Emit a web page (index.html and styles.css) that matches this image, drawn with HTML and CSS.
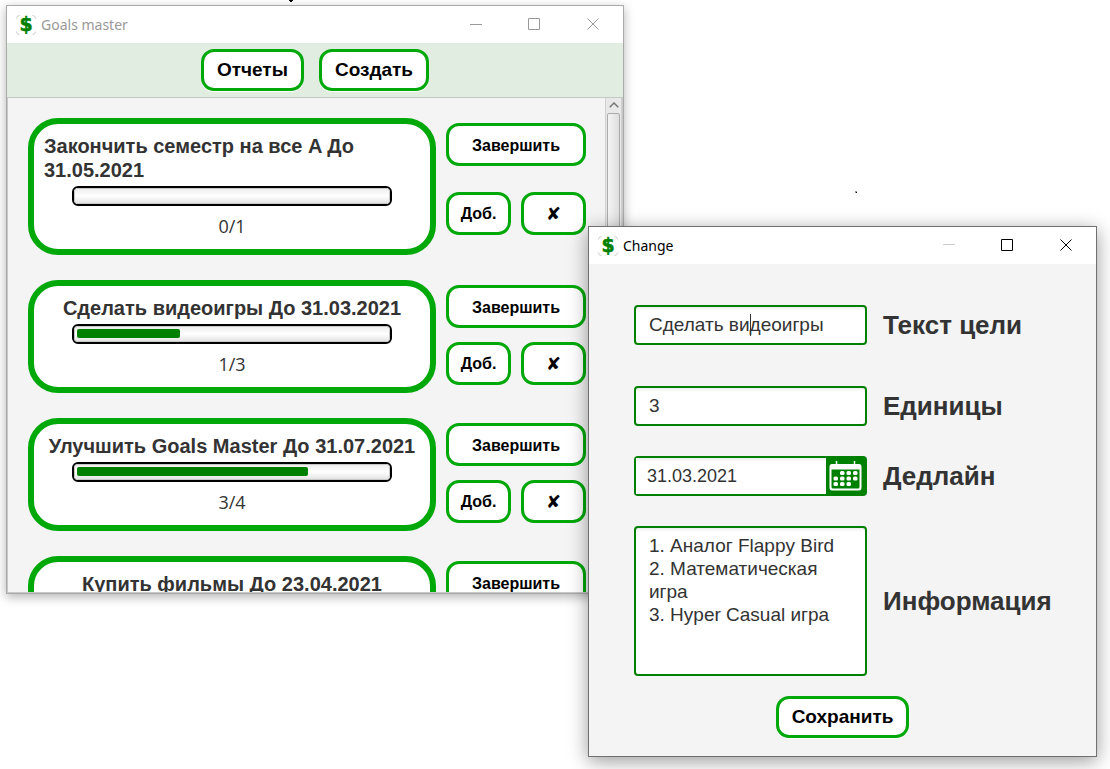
FILE: index.html
```html
<!DOCTYPE html>
<html lang="ru">
<head>
  <meta charset="utf-8">
  <title>Goals master</title>
  <link rel="stylesheet" href="styles.css">
</head>
<body class="desktop">
  <svg class="speck speck-top" width="4" height="2" viewBox="0 0 4 2" aria-hidden="true"><path d="M0 0h4v1H3v1H1V1H0z"/></svg>
  <svg class="speck speck-side" width="2" height="2" viewBox="0 0 2 2" aria-hidden="true"><path d="M0 0h2v2H0z" fill="#999"/><path d="M1 1h1v1H1z"/></svg>

  <section class="window window-goals" aria-label="Goals master">
    <header class="titlebar">
      <svg class="app-icon" width="20" height="20" viewBox="0 0 20 20" aria-hidden="true">
        <path class="app-icon-corners" d="M.5 3.500Q.5.500 3.500.500M16.500.500Q19.500.500 19.500 3.500M19.500 16.500Q19.500 19.500 16.500 19.500M3.500 19.500Q.5 19.500 .5 16.500"/>
        <text x="10" y="16" text-anchor="middle">$</text>
      </svg>
      <h1 class="title">Goals master</h1>
      <div class="controls">
        <button class="control" aria-label="Свернуть"><svg width="13" height="13" viewBox="0 0 13 13"><path d="M1 6.500h12"/></svg></button>
        <button class="control" aria-label="Развернуть"><svg width="13" height="13" viewBox="0 0 13 13"><path d="M.5.500h11v11H.5z"/></svg></button>
        <button class="control" aria-label="Закрыть"><svg width="13" height="13" viewBox="0 0 13 13"><path d="M.5.500l11 11M11.500.500l-11 11"/></svg></button>
      </div>
    </header>
    <nav class="toolbar">
      <button class="btn btn-large">Отчеты</button>
      <button class="btn btn-large">Создать</button>
    </nav>
    <main class="scroll-pane">
      <div class="goals">
        <article class="goal">
          <div class="card">
            <h2 class="goal-title">Закончить семестр на все A До 31.05.2021</h2>
            <progress class="bar" value="0" max="1" aria-label="Прогресс"></progress>
            <p class="count">0/1</p>
          </div>
          <div class="actions">
            <button class="btn btn-wide">Завершить</button>
            <button class="btn">Доб.</button>
            <button class="btn btn-cross">✘</button>
          </div>
        </article>
        <article class="goal">
          <div class="card">
            <h2 class="goal-title">Сделать видеоигры До 31.03.2021</h2>
            <progress class="bar" value="1" max="3" aria-label="Прогресс"></progress>
            <p class="count">1/3</p>
          </div>
          <div class="actions">
            <button class="btn btn-wide">Завершить</button>
            <button class="btn">Доб.</button>
            <button class="btn btn-cross">✘</button>
          </div>
        </article>
        <article class="goal">
          <div class="card">
            <h2 class="goal-title">Улучшить Goals Master До 31.07.2021</h2>
            <progress class="bar" value="3" max="4" aria-label="Прогресс"></progress>
            <p class="count">3/4</p>
          </div>
          <div class="actions">
            <button class="btn btn-wide">Завершить</button>
            <button class="btn">Доб.</button>
            <button class="btn btn-cross">✘</button>
          </div>
        </article>
        <article class="goal">
          <div class="card">
            <h2 class="goal-title">Купить фильмы До 23.04.2021</h2>
          </div>
          <div class="actions">
            <button class="btn btn-wide">Завершить</button>
          </div>
        </article>
      </div>
      <div class="scrollbar">
        <svg class="scroll-arrow" width="10" height="6" viewBox="0 0 10 6" aria-hidden="true"><path d="M.7 5.300L5 1l4.300 4.300"/></svg>
        <div class="thumb"></div>
      </div>
    </main>
  </section>

  <section class="window window-change" aria-label="Change">
    <header class="titlebar">
      <svg class="app-icon" width="20" height="20" viewBox="0 0 20 20" aria-hidden="true">
        <path class="app-icon-corners" d="M.5 3.500Q.5.500 3.500.500M16.500.500Q19.500.500 19.500 3.500M19.500 16.500Q19.500 19.500 16.500 19.500M3.500 19.500Q.5 19.500 .5 16.500"/>
        <text x="10" y="16" text-anchor="middle">$</text>
      </svg>
      <h1 class="title">Change</h1>
      <div class="controls">
        <button class="control" aria-label="Свернуть" disabled><svg width="13" height="13" viewBox="0 0 13 13"><path d="M1 5.500h12"/></svg></button>
        <button class="control" aria-label="Развернуть"><svg width="13" height="13" viewBox="0 0 13 13"><path d="M.5.500h11v11H.5z"/></svg></button>
        <button class="control" aria-label="Закрыть"><svg width="13" height="13" viewBox="0 0 13 13"><path d="M.5.500l11 11M11.500.500l-11 11"/></svg></button>
      </div>
    </header>
    <form class="form">
      <div class="row row-spaced">
        <div class="input-wrap">
          <input class="field" id="goal-text" type="text" value="Сделать видеоигры">
          <span class="caret"></span>
        </div>
        <label class="label" for="goal-text">Текст цели</label>
      </div>
      <div class="row">
        <input class="field" id="units" type="text" value="3">
        <label class="label" for="units">Единицы</label>
      </div>
      <div class="row">
        <div class="date">
          <input class="date-field" id="deadline" type="text" value="31.03.2021">
          <button class="date-button" type="button" aria-label="Календарь">
            <svg width="33" height="30" viewBox="0 0 33 30" aria-hidden="true">
              <path d="M7.500 0v5M25.500 0v5" stroke="#fff" stroke-width="1.500"/>
              <path fill="#fff" fill-rule="evenodd" d="M3 3h27q2.500 0 2.500 3v20.500q0 3-2.500 3H3q-2.500 0-2.500-3V6q0-3 2.500-3zM2.500 8.500v17.500q0 1.500 1.500 1.500h25q1.500 0 1.500-1.500V8.500z"/>
              <g fill="#fff">
                <rect x="11" y="10" width="4.500" height="4" rx="1.500"/>
                <rect x="17.500" y="10" width="4.500" height="4" rx="1.500"/>
                <rect x="24" y="10" width="4.500" height="4" rx="1.500"/>
                <rect x="4.500" y="15.500" width="4.500" height="4" rx="1.500"/>
                <rect x="11" y="15.500" width="4.500" height="4" rx="1.500"/>
                <rect x="17.500" y="15.500" width="4.500" height="4" rx="1.500"/>
                <rect x="24" y="15.500" width="4.500" height="4" rx="1.500"/>
                <rect x="4.500" y="21" width="4.500" height="4" rx="1.500"/>
                <rect x="11" y="21" width="4.500" height="4" rx="1.500"/>
                <rect x="17.500" y="21" width="4.500" height="4" rx="1.500"/>
              </g>
            </svg>
          </button>
        </div>
        <label class="label" for="deadline">Дедлайн</label>
      </div>
      <div class="row">
        <textarea class="field field-area" id="info">1. Аналог Flappy Bird
2. Математическая игра
3. Hyper Casual игра</textarea>
        <label class="label" for="info">Информация</label>
      </div>
      <button class="btn btn-large save" type="button">Сохранить</button>
    </form>
  </section>
</body>
</html>
```
FILE: styles.css
```css
* {
  box-sizing: border-box;
}

.desktop {
  position: relative;
  min-height: 100vh;
  margin: 0;
  overflow: hidden;
  background: #fff;
  color: #333;
  font-family: "Liberation Sans", Arial, sans-serif;
}

.speck {
  position: absolute;
}

.speck-top {
  top: 0;
  left: 289px;
}

.speck-side {
  top: 191px;
  left: 855px;
}

/* Windows */
.window {
  position: absolute;
  display: flex;
  flex-direction: column;
  background: #f4f4f4;
}

.window-goals {
  top: 5px;
  right: 486px;
  bottom: 175px;
  left: 6px;
  border: 1px solid #aaa;
  box-shadow: 0 3px 10px rgba(0, 0, 0, 0.3);
}

.window-change {
  top: 226px;
  right: 13px;
  left: 588px;
  border: 1px solid #707070;
  box-shadow: 0 4px 18px rgba(0, 0, 0, 0.4);
}

.titlebar {
  display: flex;
  flex: none;
  align-items: center;
  height: 37px;
  padding-left: 9px;
  background: #fff;
}

.app-icon {
  fill: green;
  font: bold 19px "DejaVu Sans", sans-serif;
}

.app-icon text {
  stroke: green;
  stroke-width: 0.5;
}

.app-icon-corners {
  fill: none;
  stroke: #ccc;
}

.title {
  margin: 0 0 0 5px;
  color: #000;
  font: 400 14px/20px "Noto Sans", sans-serif;
}

.window-goals .title {
  color: #999;
}

.controls {
  display: flex;
  margin-left: auto;
}

.control {
  display: grid;
  place-items: center;
  width: 59px;
  height: 37px;
  padding: 0;
  border: 0;
  background: none;
  color: #000;
}

.control svg {
  fill: none;
  stroke: currentColor;
}

.control:disabled {
  color: #ccc;
}

.window-goals .control {
  color: #999;
}

/* Buttons */
.btn {
  height: 43px;
  padding: 2px 0 0;
  border: 3px solid #00a80a;
  border-radius: 13px;
  background: #fff;
  color: #000;
  font: bold 16px/20px "Liberation Sans", "DejaVu Sans", sans-serif;
}

.btn-large {
  height: 42px;
  padding: 0 13px;
  font-size: 19px;
  box-shadow: 0 1px 0 #fff;
}

.btn-cross {
  font-size: 18px;
}

.toolbar {
  display: flex;
  flex: none;
  justify-content: center;
  gap: 15px;
  padding: 6px 0;
  border-bottom: 1px solid #c4c8c4;
  background: #e0ede0;
}

/* Goal list */
.scroll-pane {
  display: flex;
  flex: 1;
  min-height: 0;
  overflow: hidden;
  border: 1px solid #c8c8c8;
  border-top: 0;
}

.goals {
  display: flex;
  flex: 1;
  flex-direction: column;
  gap: 25px;
  padding: 20px;
  padding-right: 19px;
}

.goal {
  display: grid;
  flex: none;
  grid-template-columns: 1fr 140px;
  gap: 10px;
}

.card {
  display: flex;
  flex-direction: column;
  align-items: center;
  padding: 10px;
  border: 6px solid #00a80a;
  border-radius: 30px;
  background: #fff;
}

.goal-title {
  margin: 0;
  font-size: 20px;
  line-height: 24px;
}

.bar {
  width: 320px;
  height: 20px;
  margin: 4px 0 8px;
  overflow: hidden;
  border: 2px solid #000;
  border-radius: 6px;
  appearance: none;
}

.bar::-webkit-progress-bar {
  padding: 2px 4px 3px 2px;
  border: 1px solid #c8c8c8;
  border-radius: 3px;
  background: linear-gradient(#eee, #fff 50%, #e4e4e4);
}

.bar::-webkit-progress-value {
  border-radius: 2px;
  background: green;
}

.count {
  margin: 0;
  font: 400 18px/25px "Open Sans", sans-serif;
}

.actions {
  display: grid;
  grid-template-rows: 1fr 1fr;
  grid-template-columns: 1fr 1fr;
  column-gap: 10px;
}

.actions .btn {
  margin-top: 5px;
}

.btn-wide {
  grid-column: 1 / -1;
}

.scrollbar {
  display: flex;
  flex-direction: column;
  align-items: center;
  width: 17px;
  border-right: 1px solid #d0d0d0;
  border-left: 1px solid #d0d0d0;
  background: #e8e8e8;
}

.scroll-arrow {
  flex: none;
  margin: 4px 0 5px;
  fill: none;
  stroke: #777;
  stroke-width: 1.5;
}

.thumb {
  flex: 1;
  width: 13px;
  border: 1px solid #aaa;
  border-radius: 2px;
  background: linear-gradient(90deg, #f4f4f4, #dedede);
}

/* Edit form */
.form {
  display: flex;
  flex-direction: column;
  gap: 30px;
  padding: 41px 20px 18px 45px;
}

.row {
  display: grid;
  grid-template-columns: 233px 1fr;
  align-items: center;
  gap: 16px;
}

.row-spaced {
  margin-bottom: 11px;
}

.input-wrap {
  position: relative;
}

.field {
  display: block;
  width: 100%;
  height: 40px;
  padding: 0 13px;
  border: 2px solid green;
  border-radius: 4px;
  outline: 0;
  background: linear-gradient(#eee, #fff 4px);
  color: #333;
  font: 19px/23px "Liberation Sans", Arial, sans-serif;
}

.field-area {
  height: 150px;
  padding-top: 6px;
  resize: none;
  overflow: hidden;
}

.caret {
  position: absolute;
  top: 9px;
  left: 116px;
  width: 1px;
  height: 22px;
  background: #333;
}

.date {
  display: flex;
  height: 40px;
  border: 2px solid green;
  border-radius: 4px;
  background: green;
}

.date-field {
  flex: 1;
  min-width: 0;
  padding: 0 11px;
  border: 0;
  outline: 0;
  background: linear-gradient(#eee, #fff 4px);
  color: #333;
  font: 18px/23px "Liberation Sans", Arial, sans-serif;
}

.date-button {
  display: grid;
  flex: none;
  place-items: center;
  width: 39px;
  padding: 0;
  border: 0;
  background: green;
}

.label {
  font-size: 26px;
  font-weight: bold;
  line-height: 30px;
}

.save {
  align-self: center;
  margin: -10px 25px 0 0;
}
```
